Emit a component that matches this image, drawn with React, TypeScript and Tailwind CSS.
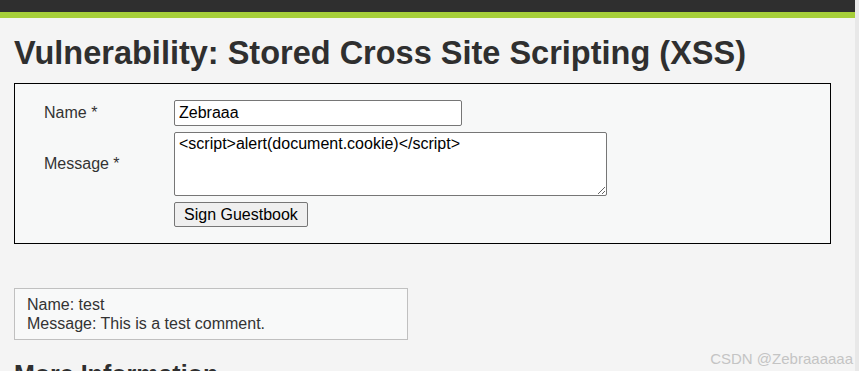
import React from 'react';

export default function App() {
  return (
    <div className="flex h-[371px] w-[859px] overflow-hidden bg-[#f4f4f4] font-['Liberation_Sans',Arial,sans-serif] text-[#333]">
      <div className="relative flex-1">
        <div className="h-[12px] bg-[#2f2f2f]" />
        <div className="h-[6px] bg-[#a6ce39]" />

        <div className="pl-[14px]">
          <h1 className="mt-[15px] text-[32.5px] font-bold leading-[40px] text-[#2f2f2f]">
            Vulnerability: Stored Cross Site Scripting (XSS)
          </h1>

          <div className="mt-[10px] w-[817px] border border-black bg-[#f7f8f8] pt-[16px] pb-[16px] text-[16px]">
            <div className="flex items-center">
              <label className="w-[159px] pl-[29px]">Name *</label>
              <input
                defaultValue="Zebraaa"
                className="h-[26px] w-[288px] rounded-[2px] border border-[#767676] bg-white px-[4px] text-[16px] text-black outline-none"
              />
            </div>
            <div className="mt-[6px] flex items-center">
              <label className="w-[159px] pl-[29px]">Message *</label>
              <textarea
                defaultValue="<script>alert(document.cookie)</script>"
                className="h-[64px] w-[433px] rounded-[2px] border border-[#767676] bg-white px-[4px] pt-[1px] text-[16px] leading-[19px] text-black outline-none"
              />
            </div>
            <div className="mt-[6px] flex">
              <div className="w-[159px]" />
              <button className="h-[25px] rounded-[2px] border border-[#767676] bg-[#efefef] px-[9px] text-[16px] leading-[20px] text-black">
                Sign Guestbook
              </button>
            </div>
          </div>

          <div className="mt-[44px] w-[394px] border border-[#c0c0c0] bg-[#f8f9f9] pt-[6px] pb-[6px] pl-[12px] text-[16px] leading-[19px]">
            <div>Name: test</div>
            <div>Message: This is a test comment.</div>
          </div>

          <h2 className="mt-[19px] text-[25px] font-bold leading-[30px] text-[#2f2f2f]">More Information</h2>
        </div>

        <div className="absolute right-[2px] top-[348px] text-[15px] text-[#c4c4c4]">CSDN @Zebraaaaaa</div>
      </div>
      <div className="w-[4px] bg-[#e8e8e8]" />
    </div>
  );
}
